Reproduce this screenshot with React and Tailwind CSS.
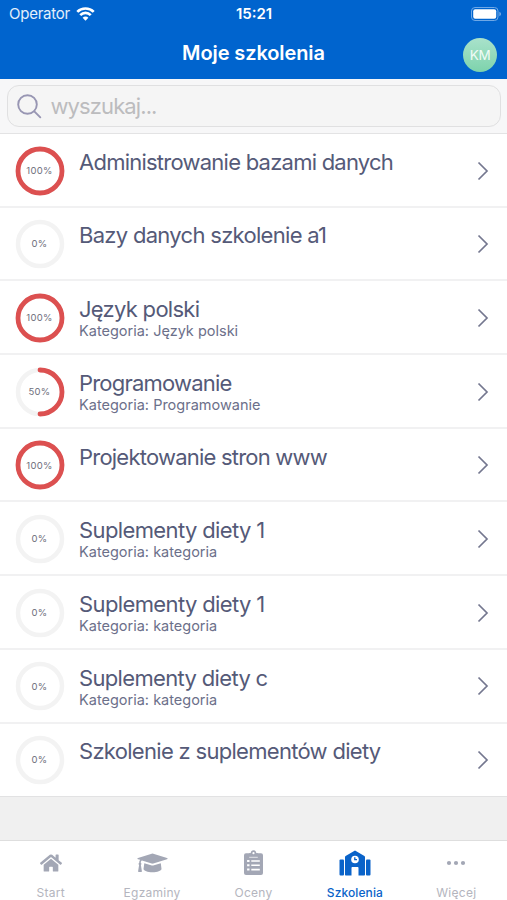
import { FaHome } from 'react-icons/fa';

const courses = [
    { id: 1, name: 'Administrowanie bazami danych', progress: 100, tracking: 'tracking-[-0.76px]' },
    { id: 2, name: 'Bazy danych szkolenie a1', progress: 0, tracking: 'tracking-[-0.7px]' },
    { id: 3, name: 'Język polski', category: 'Język polski', progress: 100, tracking: 'tracking-[-0.72px]' },
    { id: 4, name: 'Programowanie', category: 'Programowanie', progress: 50, tracking: 'tracking-[-0.8px]' },
    { id: 5, name: 'Projektowanie stron www', progress: 100, tracking: 'tracking-[-0.78px]' },
    { id: 6, name: 'Suplementy diety 1', category: 'kategoria', progress: 0, tracking: 'tracking-[-0.62px]' },
    { id: 7, name: 'Suplementy diety 1', category: 'kategoria', progress: 0, tracking: 'tracking-[-0.62px]' },
    { id: 8, name: 'Suplementy diety c', category: 'kategoria', progress: 0, tracking: 'tracking-[-0.66px]' },
    { id: 9, name: 'Szkolenie z suplementów diety', progress: 0, tracking: 'tracking-[-0.7px]' },
];

function WifiIcon() {
    return (
        <svg viewBox="0 0 20 15" className="w-[19px] h-[14px]" fill="none" stroke="white" strokeWidth="2.9">
            <path d="M1.2 5.2C6 .4 14 .4 18.8 5.2" />
            <path d="M4.4 8.7c3.1-3.1 8.1-3.1 11.2 0" />
            <path d="M10 14.6 6.9 11.4c1.7-1.7 4.5-1.7 6.2 0z" fill="white" stroke="none" />
        </svg>
    );
}

function BatteryIcon() {
    return (
        <svg viewBox="0 0 30 14" className="w-[30px] h-[14px]">
            <rect x=".5" y=".5" width="26.5" height="13" rx="3.5" fill="none" stroke="#6fa8e6" />
            <rect x="2.2" y="2.2" width="23" height="9.6" rx="2" fill="white" />
            <path d="M28.3 4.7c1.3.5 1.7 1.3 1.7 2.3s-.4 1.800-1.7 2.3z" fill="#6fa8e6" />
        </svg>
    );
}

function GraduationIcon() {
    return (
        <svg viewBox="0 0 31 20" className="w-[31px] h-5" fill="currentColor">
            <path d="M15.500.6 30 5c.8.3.8 1 0 1.300L16.300 10.500c-.5.2-1.100.2-1.600 0L5 7.500c-1 .4-1.200 1.200-1.200 2.300.8.5.8 1.600.1 2.100l1 6.300c0 .5-.2.800-.6.800H1.700c-.4 0-.7-.3-.6-.800l1-6.300c-.7-.5-.7-1.600.1-2.100 0-1.200.3-2.200 1-3L1 6.300C.2 6 .2 5.300 1 5z" />
            <path d="M7.300 10.300 14 12.300c1 .3 2 .3 3 0l6.800-2 .7 5.600c-.3 1.700-4 3.300-9 3.300s-8.700-1.600-9-3.300z" />
        </svg>
    );
}

function ClipboardIcon() {
    return (
        <svg viewBox="0 0 19 25" className="w-[19px] h-[25px]">
            <rect y="3.2" width="19" height="21.8" rx="2" fill="currentColor" />
            <path d="M5 6.500V3.300h1.700C6.700 1.400 7.900.2 9.500.2s2.800 1.200 2.800 3.100H14v3.200z" fill="currentColor" />
            <circle cx="9.5" cy="3.2" r="1.1" fill="white" />
            <path d="M5.200 7.300h8.600" stroke="white" strokeWidth=".7" />
            <path d="M3.100 11h2.400M3.100 15.300h2.400M3.100 19.600h2.400" stroke="white" strokeWidth="2" />
            <path d="M7.300 11h8.500M7.300 15.300h8.500M7.300 19.600h8.500" stroke="white" strokeWidth="1.6" />
        </svg>
    );
}

function SchoolIcon() {
    return (
        <svg viewBox="0 0 32 26" className="w-8 h-[26px]" fill="currentColor">
            <rect x=".5" y="9.5" width="4.5" height="16" rx="1" />
            <rect x="27" y="9.5" width="4.5" height="16" rx="1" />
            <path d="M16 .6 25.400 6c.4.3.6.6.6 1.100v17.400c0 .6-.4 1-1 1h-5.500V18c0-.6-.4-1-1-1h-5c-.6 0-1 .4-1 1v7.500H7c-.6 0-1-.4-1-1V7.100c0-.5.200-.8.600-1.100z" />
            <circle cx="16" cy="9.5" r="3.8" fill="white" />
            <path d="M15.800 7.200v2.500h2.200" fill="none" stroke="currentColor" strokeWidth="1.300" />
        </svg>
    );
}

function DotsIcon() {
    return (
        <svg viewBox="0 0 20 6" className="w-5 h-1.5" fill="currentColor">
            <circle cx="3" cy="3" r="2.1" />
            <circle cx="10" cy="3" r="2.1" />
            <circle cx="17" cy="3" r="2.1" />
        </svg>
    );
}

const tabs = [
    { label: 'Start', icon: <FaHome className="w-[22px] h-[20px]" /> },
    { label: 'Egzaminy', icon: <GraduationIcon /> },
    { label: 'Oceny', icon: <ClipboardIcon /> },
    { label: 'Szkolenia', icon: <SchoolIcon />, active: true },
    { label: 'Więcej', icon: <DotsIcon /> },
];

function ProgressRing({ value }) {
    return (
        <div className="grid place-items-center w-[50px] h-[50px] shrink-0">
            <svg viewBox="0 0 50 50" className="col-start-1 row-start-1 w-[50px] h-[50px] -rotate-90" fill="none">
                <circle cx="25" cy="25" r="22" stroke="#f3f3f3" strokeWidth="4.5" />
                {value > 0 && (
                    <circle
                        cx="25"
                        cy="25"
                        r="22"
                        stroke="#dc5050"
                        strokeWidth="4.8"
                        strokeLinecap="round"
                        pathLength="100"
                        strokeDasharray={`${value} 100`}
                    />
                )}
            </svg>
            <span className="col-start-1 row-start-1 pr-px text-[9.5px] leading-none tracking-[0.3px] text-[#6e6e7c]">{value}%</span>
        </div>
    );
}

function CourseRow({ course }) {
    return (
        <li className="flex h-[73.7px] border-b-2 border-[#f1f1f2] pl-[15px] pr-[18.5px] last:border-b last:border-[#e2e2e3]">
            <div className="pt-[11.5px]">
                <ProgressRing value={course.progress} />
            </div>
            <div className="flex-1 pl-[14px] pt-[14.8px] whitespace-nowrap">
                <p className={`text-[22px] leading-[27px] text-[#555a78] ${course.tracking}`}>{course.name}</p>
                {course.category && (
                    <p className="text-[14.5px] leading-[16.5px] text-[#6c708a]">Kategoria: {course.category}</p>
                )}
            </div>
            <svg viewBox="0 0 12 20" className="mt-[26.5px] w-3 h-5" fill="none" stroke="#74778f" strokeWidth="1.7">
                <path d="M1.5 1.5 10 10l-8.5 8.5" />
            </svg>
        </li>
    );
}

export default function App() {
    return (
        <div className="flex flex-col w-[507px] h-[900px] overflow-hidden bg-[#f0f0f0] font-['Inter',sans-serif]">
            {/* Header */}
            <header className="h-[79px] shrink-0 bg-[#0064ce] text-white">
                <div className="grid grid-cols-3 items-center h-[27px] pl-[9px] pr-[6px]">
                    <div className="flex items-center gap-[6px] text-[15px] tracking-[-0.25px] text-[#e3effb]">
                        <span className="pt-px">Operator</span>
                        <WifiIcon />
                    </div>
                    <span className="pr-[2px] pt-px text-center text-[15px] font-semibold">15:21</span>
                    <div className="flex justify-end">
                        <BatteryIcon />
                    </div>
                </div>
                <div className="grid grid-cols-[34px_1fr_34px] items-center h-[52px] px-[10px]">
                    <span />
                    <h1 className="text-center text-[20px] font-semibold leading-6 tracking-[-0.1px]">Moje szkolenia</h1>
                    <div className="flex items-center justify-center w-[34px] h-[34px] mt-1 rounded-full bg-linear-to-b from-[#a9e2cb] to-[#7dd3ac] text-[13.5px] tracking-[-0.3px] text-[#f0fbf6]">
                        KM
                    </div>
                </div>
            </header>

            {/* Search */}
            <div className="h-[55px] shrink-0 border-b border-[#e3e3e4] bg-[#f7f7f8] pl-[7px] pr-[6px] pt-[6px]">
                <div className="flex items-center h-[42px] rounded-[12px] border border-[#e0e0e1] bg-[#f5f5f5] pl-[8px]">
                    <svg viewBox="0 0 26 26" className="w-[26px] h-[26px]" fill="none" stroke="#9896b3" strokeWidth="1.9" strokeLinecap="round">
                        <circle cx="11.5" cy="11.5" r="9.3" />
                        <path d="m18.3 18.3 6 6" />
                    </svg>
                    <span className="pl-[8.5px] text-[22px] leading-none tracking-[-0.9px] text-[#bcbcbe]">wyszukaj...</span>
                </div>
            </div>

            {/* Course list */}
            <ul className="shrink-0 bg-white">
                {courses.map((course) => (
                    <CourseRow key={course.id} course={course} />
                ))}
            </ul>

            {/* Tab bar */}
            <nav className="mt-auto grid grid-cols-5 h-[60px] shrink-0 border-t border-[#dedede] bg-white">
                {tabs.map((tab) => (
                    <div
                        key={tab.label}
                        className={`flex flex-col items-center pt-[8px] ${tab.active ? 'text-[#0a63c9]' : 'text-[#a3a7b5]'}`}
                    >
                        <div className="flex items-center justify-center h-[27px]">{tab.icon}</div>
                        <span className={`mt-[9px] text-[12px] leading-4 ${tab.active ? 'tracking-[0.1px] font-medium' : 'tracking-[0.25px] text-[#b4b5be]'}`}>
                            {tab.label}
                        </span>
                    </div>
                ))}
            </nav>
        </div>
    );
}
